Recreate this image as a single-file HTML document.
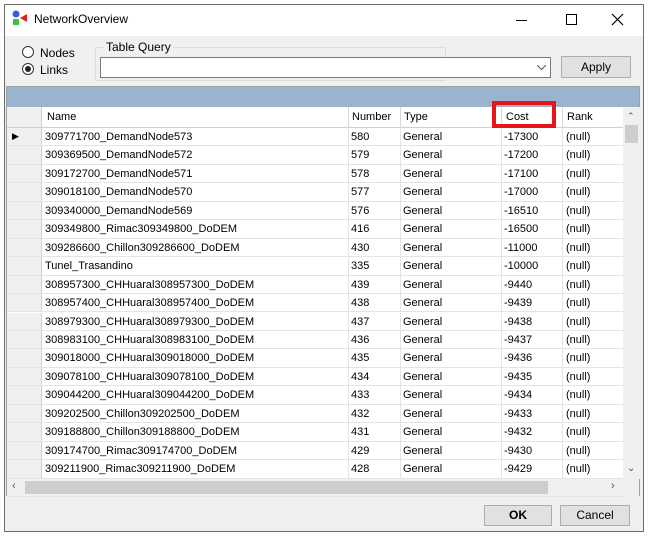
<!DOCTYPE html>
<html><head><style>
*{box-sizing:border-box;margin:0;padding:0}
body{width:649px;height:537px;background:#fff;font-family:"Liberation Sans",sans-serif;font-size:11px;color:#000;position:relative;overflow:hidden}
.abs{position:absolute}
.win{left:4px;top:4px;width:640px;height:528px;border:1px solid #6b6b6b;background:#f0f0f0}
.title{left:5px;top:5px;width:638px;height:31px;background:#fff}
.grid{left:6px;top:86px;width:634px;height:410px;background:#fff;border:1px solid #a0a0a0}
.row{position:absolute;left:0;height:18.45px;width:616px;border-bottom:1px solid #e4e4e4}
.c{position:absolute;top:3px;white-space:nowrap}
.rh{position:absolute;left:0;width:35px;height:100%;background:#f0f0f0;border-right:1px solid #d0d0d0}
.btn{background:#e1e1e1;border:1px solid #adadad;text-align:center;font-size:12px}
</style></head><body>
<div class="abs win"></div>
<div class="abs title"></div>
<svg class="abs" style="left:12px;top:10px" width="18" height="16"><circle cx="4" cy="4" r="3.5" fill="#3b5bdb"/><rect x="1" y="9" width="6" height="6" fill="#40c040"/><polygon points="8,8 15,4 15,12" fill="#e02020"/></svg>
<div class="abs" style="left:34px;top:12px;font-size:12px">NetworkOverview</div>
<div class="abs" style="left:516px;top:20px;width:11px;height:1px;background:#000"></div>
<div class="abs" style="left:566px;top:14px;width:11px;height:11px;border:1px solid #000"></div>
<svg class="abs" style="left:611px;top:13px" width="13" height="13"><path d="M1 1L12 12M12 1L1 12" stroke="#000" stroke-width="1.2"/></svg>
<div class="abs" style="left:22px;top:46px;width:12px;height:12px;border:1px solid #333;border-radius:50%;background:#fff"></div>
<div class="abs" style="left:40px;top:46px;font-size:12px">Nodes</div>
<div class="abs" style="left:22px;top:63px;width:12px;height:12px;border:1px solid #333;border-radius:50%;background:#fff"></div>
<div class="abs" style="left:25px;top:66px;width:6px;height:6px;border-radius:50%;background:#222"></div>
<div class="abs" style="left:40px;top:63px;font-size:12px">Links</div>
<div class="abs" style="left:95px;top:47px;width:351px;height:34px;border:1px solid #dcdcdc"></div>
<div class="abs" style="left:104px;top:40px;background:#f0f0f0;padding:0 2px;font-size:12px">Table Query</div>
<div class="abs" style="left:100px;top:57px;width:451px;height:21px;border:1px solid #7a7a7a;background:#fff"></div>
<svg class="abs" style="left:537px;top:65px" width="9" height="6"><path d="M0 0L4.5 4.5L9 0" fill="none" stroke="#555"/></svg>
<div class="abs btn" style="left:561px;top:56px;width:70px;height:22px;line-height:20px">Apply</div>
<div class="abs grid">
<div class="abs" style="left:0;top:0;width:632px;height:20px;background:#9ab4d0"></div>
<div class="abs" style="left:0;top:20px;width:616px;height:21px;background:#fff;border-bottom:1px solid #d0d0d0">
<div class="rh" style="background:#f0f0f0"></div>
<div class="c" style="left:40px;top:4px">Name</div>
<div class="abs" style="left:341px;top:0;height:21px;border-left:1px solid #d8d8d8"></div>
<div class="c" style="left:345px;top:4px">Number</div>
<div class="abs" style="left:393px;top:0;height:21px;border-left:1px solid #d8d8d8"></div>
<div class="c" style="left:397px;top:4px">Type</div>
<div class="abs" style="left:494px;top:0;height:21px;border-left:1px solid #d8d8d8"></div>
<div class="c" style="left:499px;top:4px">Cost</div>
<div class="abs" style="left:555px;top:0;height:21px;border-left:1px solid #d8d8d8"></div>
<div class="c" style="left:560px;top:4px">Rank</div>
</div>
<div id="rows"></div>
<div class="abs" style="left:616px;top:20px;width:17px;height:372px;background:#f0f0f0"></div>
<div class="abs" style="left:618px;top:38px;width:13px;height:18px;background:#cdcdcd"></div>
<div class="abs" style="left:620px;top:24px;font-size:9px;color:#555">&#8963;</div>
<div class="abs" style="left:620px;top:376px;font-size:10px;color:#555">&#8964;</div>
<div class="abs" style="left:0;top:392px;width:632px;height:17px;background:#f0f0f0"></div>
<div class="abs" style="left:18px;top:394px;width:523px;height:13px;background:#cdcdcd"></div>
<div class="abs" style="left:5px;top:393px;font-size:11px;color:#555">&#8249;</div>
<div class="abs" style="left:604px;top:393px;font-size:11px;color:#555">&#8250;</div>
</div>
<div class="abs" style="left:492px;top:101px;width:64px;height:27px;border:4px solid #e8141b"></div>
<div class="abs btn" style="left:484px;top:505px;width:68px;height:21px;line-height:19px;font-weight:bold">OK</div>
<div class="abs btn" style="left:560px;top:505px;width:70px;height:21px;line-height:19px">Cancel</div>
<script>
var d=[["309771700_DemandNode573",580,-17300],["309369500_DemandNode572",579,-17200],["309172700_DemandNode571",578,-17100],["309018100_DemandNode570",577,-17000],["309340000_DemandNode569",576,-16510],["309349800_Rimac309349800_DoDEM",416,-16500],["309286600_Chillon309286600_DoDEM",430,-11000],["Tunel_Trasandino",335,-10000],["308957300_CHHuaral308957300_DoDEM",439,-9440],["308957400_CHHuaral308957400_DoDEM",438,-9439],["308979300_CHHuaral308979300_DoDEM",437,-9438],["308983100_CHHuaral308983100_DoDEM",436,-9437],["309018000_CHHuaral309018000_DoDEM",435,-9436],["309078100_CHHuaral309078100_DoDEM",434,-9435],["309044200_CHHuaral309044200_DoDEM",433,-9434],["309202500_Chillon309202500_DoDEM",432,-9433],["309188800_Chillon309188800_DoDEM",431,-9432],["309174700_Rimac309174700_DoDEM",429,-9430],["309211900_Rimac309211900_DoDEM",428,-9429],["",0,""]];
var h="";
d.forEach(function(r,i){var t=41+i*18.45;
h+='<div class="row" style="top:'+t+'px"><div class="rh">'+(i==0?'<span style="position:absolute;left:5px;top:3px;font-size:9px">&#9654;</span>':'')+'</div>'+
'<div class="abs" style="left:341px;top:0;height:100%;border-left:1px solid #e4e4e4"></div><div class="abs" style="left:393px;top:0;height:100%;border-left:1px solid #e4e4e4"></div><div class="abs" style="left:494px;top:0;height:100%;border-left:1px solid #e4e4e4"></div><div class="abs" style="left:555px;top:0;height:100%;border-left:1px solid #e4e4e4"></div>'+
(r[0]?'<div class="c" style="left:38px">'+r[0]+'</div><div class="c" style="left:344px">'+r[1]+'</div><div class="c" style="left:396px">General</div><div class="c" style="left:497px">'+r[2]+'</div><div class="c" style="left:559px">(null)</div>':'')+'</div>';});
document.getElementById("rows").innerHTML=h;
</script>
</body></html>
